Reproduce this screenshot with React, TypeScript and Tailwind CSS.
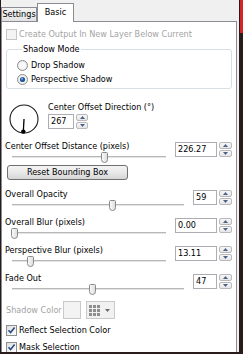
const ui = "font-['DejaVu_Sans_Condensed','DejaVu_Sans',sans-serif] text-[9px] leading-[11px] text-black";

function CheckBox({ checked = false, disabled = false }: { checked?: boolean; disabled?: boolean }) {
  return (
    <span
      className={`flex h-[11px] w-[11px] shrink-0 items-center justify-center border ${
        disabled ? 'border-[#c6c6c6] bg-[#f4f4f4]' : 'border-[#8e8f8f] bg-linear-to-br from-[#dedede] to-white'
      }`}
    >
      {checked && (
        <svg width="9" height="9" viewBox="0 0 9 9">
          <path d="M1.5 4.3 L3.6 6.6 L7.6 1.6" fill="none" stroke="#2b4b88" strokeWidth="1.6" />
        </svg>
      )}
    </span>
  );
}

function Radio({ checked = false }: { checked?: boolean }) {
  return (
    <svg width="11" height="11" viewBox="0 0 11 11" className="shrink-0">
      <circle cx="5.5" cy="5.5" r="5" fill="#ececec" stroke="#8e8f8f" />
      <circle cx="5.5" cy="5.5" r="3.6" fill="#f8f8f8" />
      {checked && <circle cx="5.5" cy="5.5" r="2.6" fill="#235a9c" />}
      {checked && <circle cx="5" cy="4.8" r="1" fill="#7fb2e8" />}
    </svg>
  );
}

function SpinButtons({ width = 'w-[13px]' }: { width?: string }) {
  return (
    <div className={`flex h-[15px] flex-col gap-px ${width}`}>
      <div className="flex flex-1 items-center justify-center rounded-[2px] border border-[#b9b9b9] bg-linear-to-b from-[#f7f7f7] to-[#e6e6e6]">
        <svg width="5" height="3" viewBox="0 0 5 3">
          <path d="M0 3 L2.5 0 L5 3 Z" fill="#4d6185" />
        </svg>
      </div>
      <div className="flex flex-1 items-center justify-center rounded-[2px] border border-[#b9b9b9] bg-linear-to-b from-[#f7f7f7] to-[#e6e6e6]">
        <svg width="5" height="3" viewBox="0 0 5 3">
          <path d="M0 0 L2.5 3 L5 0 Z" fill="#4d6185" />
        </svg>
      </div>
    </div>
  );
}

function SpinBox({ value, width, buttons }: { value: string; width: string; buttons?: string }) {
  return (
    <div className="flex shrink-0 gap-[2px]">
      <div className={`flex h-[15px] items-center border border-[#abadb3] bg-white pl-[2px] ${width}`}>{value}</div>
      <SpinButtons width={buttons} />
    </div>
  );
}

function Thumb() {
  return (
    <svg width="7" height="11" viewBox="0 0 7 11">
      <defs>
        <linearGradient id="thumbFill" x1="0" y1="0" x2="1" y2="0">
          <stop offset="0" stopColor="#fbfbfb" />
          <stop offset="1" stopColor="#dcdcdc" />
        </linearGradient>
      </defs>
      <path
        d="M0.5 1.5 A1 1 0 0 1 1.5 0.5 H5.5 A1 1 0 0 1 6.5 1.5 V7.5 Q6.5 10.5 3.5 10.5 Q0.5 10.5 0.5 7.5 Z"
        fill="url(#thumbFill)"
        stroke="#8a8a8a"
      />
    </svg>
  );
}

function Slider({ pct }: { pct: number }) {
  return (
    <div className="relative ml-[7px] mr-[9px] h-[11px] pt-[4px]">
      <div className="h-[2px] border-t border-[#b7b7b7] bg-[#e4e4e4]" />
      <div className="absolute top-0" style={{ left: `calc(${pct} * (100% - 6px) - 1px)` }}>
        <Thumb />
      </div>
    </div>
  );
}

function SliderRow({ label, value, pct, wide, className = '' }: { label: string; value: string; pct: number; wide: boolean; className?: string }) {
  return (
    <div className={`flex items-start pl-[3px] pr-[4px] ${className}`}>
      <div className="flex-1">
        <div className="h-[11px]">{label}</div>
        <Slider pct={pct} />
      </div>
      <div className="mt-px">
        <SpinBox value={value} width={wide ? 'w-[42px]' : 'w-[24px]'} />
      </div>
    </div>
  );
}

function Dial({ angle }: { angle: number }) {
  const rad = (angle * Math.PI) / 180;
  const x = 15 + 12.6 * Math.cos(rad);
  const y = 15 - 12.6 * Math.sin(rad);
  return (
    <svg width="30" height="30" viewBox="0 0 30 30" className="mt-[2px] shrink-0">
      <circle cx="15" cy="15" r="14" fill="none" stroke="#1a1a1a" strokeWidth="1.1" />
      <line x1="15" y1="15" x2={x} y2={y} stroke="#000" strokeWidth="1.3" />
      <circle cx={x} cy={y} r="2.2" fill="#000" />
    </svg>
  );
}

export default function App() {
  return (
    <div className={`flex h-[354px] w-[243px] gap-px bg-[#2a1b1b] pb-[2px] pl-px ${ui}`}>
      <div className="flex h-[352px] w-[238px] flex-col overflow-hidden bg-[#f0f0f0]">
        {/* tabs */}
        <div className="flex h-[21px] shrink-0 items-end">
          <div className="flex h-[14px] w-[36px] items-center justify-center border border-b-0 border-[#898c95] bg-linear-to-b from-[#f3f3f3] to-[#e2e2e2]">
            Settings
          </div>
          <div className="relative z-10 -mb-px flex h-[19px] w-[37px] justify-center border border-b-0 border-[#898c95] bg-white pt-[3px]">
            Basic
          </div>
        </div>

        {/* panel */}
        <div className="mr-[2px] flex flex-1 flex-col border border-b-0 border-[#898c95] bg-white">
          <div className="mt-[7px] flex h-[11px] items-center gap-[2px] pl-[4px] text-[#a3a3a3]">
            <CheckBox disabled />
            <span>Create Output In New Layer Below Current</span>
          </div>

          <fieldset className="mx-[4px] mt-[4px] rounded-[3px] border border-[#d5dfe5] pb-[3px] pl-[10px]">
            <legend className="ml-[5px] px-px">Shadow Mode</legend>
            <div className="mt-[5px] flex h-[11px] items-center gap-[3px]">
              <Radio />
              <span>Drop Shadow</span>
            </div>
            <div className="mt-[3px] flex h-[11px] items-center gap-[3px]">
              <Radio checked />
              <span>Perspective Shadow</span>
            </div>
          </fieldset>

          <div className="mt-[13px] flex items-start gap-[9px] pl-[7px]">
            <Dial angle={267} />
            <div className="flex flex-col gap-px">
              <div className="h-[11px]">Center Offset Direction (°)</div>
              <SpinBox value="267" width="w-[26px]" buttons="w-[12px]" />
            </div>
          </div>

          <SliderRow className="mt-[7px]" label="Center Offset Distance (pixels)" value="226.27" pct={0.605} wide />

          <button className="ml-[5px] mt-[2px] flex h-[15px] w-[121px] items-center justify-center rounded-[3px] border border-[#707070] bg-linear-to-b from-[#f4f4f4] via-[#e8e8e8] to-[#d6d6d6]">
            Reset Bounding Box
          </button>

          <SliderRow className="mt-[9px]" label="Overall Opacity" value="59" pct={0.59} wide={false} />
          <SliderRow className="mt-[6px]" label="Overall Blur (pixels)" value="0.00" pct={0} wide />
          <SliderRow className="mt-[6px]" label="Perspective Blur (pixels)" value="13.11" pct={0.11} wide />
          <SliderRow className="mt-[6px]" label="Fade Out" value="47" pct={0.47} wide={false} />

          <div className="mt-[6px] flex h-[18px] items-center pl-[4px]">
            <span className="w-[57px] whitespace-nowrap text-[#a3a3a3]">Shadow Color</span>
            <div className="h-[18px] w-[18px] border border-[#c9c9c9] bg-[#f3f3f3]" />
            <div className="ml-[5px] flex h-[18px] w-[29px] items-center gap-[5px] border border-[#c9c9c9] bg-[#f1f1f1] pl-[2px]">
              <svg width="11" height="11" viewBox="0 0 11 11">
                {[0, 4, 8].map((gy) =>
                  [0, 4, 8].map((gx) => <rect key={`${gx}-${gy}`} x={gx} y={gy} width="3" height="3" fill="#8d8d8d" />)
                )}
              </svg>
              <svg width="5" height="3" viewBox="0 0 5 3">
                <path d="M0 0 L2.5 3 L5 0 Z" fill="#6a6a6a" />
              </svg>
            </div>
          </div>

          <div className="mt-[6px] flex h-[11px] items-center gap-[2px] pl-[4px]">
            <CheckBox checked />
            <span>Reflect Selection Color</span>
          </div>
          <div className="mt-[6px] flex h-[11px] items-center gap-[2px] pl-[4px]">
            <CheckBox checked />
            <span>Mask Selection</span>
          </div>
        </div>
      </div>
      <div className="flex w-[3px] flex-col">
        <div className="h-[33px] bg-[#d62424]" />
      </div>
    </div>
  );
}
